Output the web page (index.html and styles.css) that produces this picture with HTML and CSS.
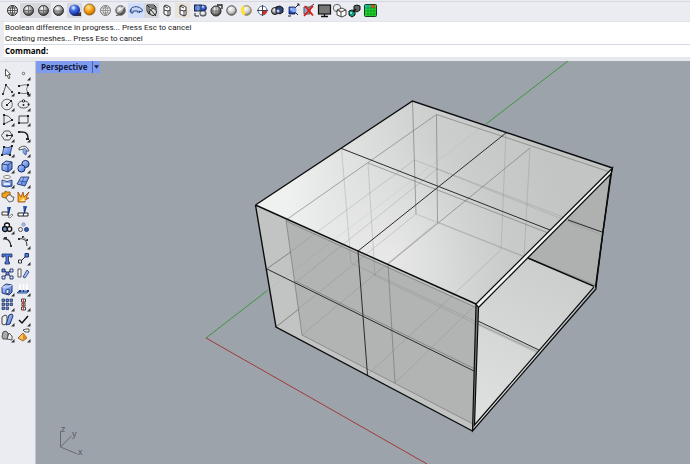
FILE: index.html
```html
<!DOCTYPE html>
<html lang="en">
<head>
<meta charset="utf-8">
<title>Perspective</title>
<link rel="stylesheet" href="styles.css">
</head>
<body>
<svg class="defs" aria-hidden="true">
  <defs>
    <radialGradient id="gray" cx=".4" cy=".3" r=".7"><stop offset="0" stop-color="#fff"/><stop offset=".5" stop-color="#aaa"/><stop offset="1" stop-color="#333"/></radialGradient>
    <radialGradient id="lite" cx=".4" cy=".3" r=".7"><stop offset="0" stop-color="#fff"/><stop offset=".6" stop-color="#ccc"/><stop offset="1" stop-color="#777"/></radialGradient>
    <radialGradient id="blue" cx=".4" cy=".3" r=".7"><stop offset="0" stop-color="#fff"/><stop offset=".35" stop-color="#4a78ee"/><stop offset="1" stop-color="#071c8c"/></radialGradient>
    <radialGradient id="orange" cx=".4" cy=".3" r=".7"><stop offset="0" stop-color="#ffe9a0"/><stop offset=".5" stop-color="#fba418"/><stop offset="1" stop-color="#c96a00"/></radialGradient>
    <linearGradient id="steel" x1="0" y1="0" x2="1" y2="1"><stop offset="0" stop-color="#c5d6fb"/><stop offset="1" stop-color="#3f70e0"/></linearGradient>
    <symbol id="grid" viewBox="0 0 15 15"><path d="M3 5h9M2.500 7.500h10M3 10h9M7.500 2.500v10M7.500 2.500c-3 3-3 7 0 10M7.500 2.500c3 3 3 7 0 10" fill="none" stroke="currentColor" stroke-width=".8"/></symbol>
    <symbol id="tick" viewBox="0 0 15 15"><path d="M14.500 11v3.500h-3.500z" fill="#333"/></symbol>
  </defs>
</svg>
<div class="app">
  <header class="toolbar">
    <div class="group">
      <button class="tool" aria-label="Wireframe"><svg viewBox="0 0 15 15"><circle cx="7.500" cy="7.500" r="5" fill="#fff" stroke="#222"/><use href="#grid"/></svg></button>
      <button class="tool pressed" aria-label="Shaded"><svg viewBox="0 0 15 15"><circle cx="7.500" cy="7.500" r="5" fill="url(#gray)" stroke="#333"/><path d="M3 7.500h9M7.500 3v9" stroke="#555" stroke-width=".7"/></svg></button>
      <button class="tool pressed" aria-label="Rendered"><svg viewBox="0 0 15 15"><circle cx="7.500" cy="7.500" r="5" fill="url(#gray)" stroke="#333"/><path d="M3 7.500h9M7.500 3v9" stroke="#555" stroke-width=".7"/></svg></button>
      <button class="tool" aria-label="Ghosted"><svg viewBox="0 0 15 15"><circle cx="7.500" cy="7.500" r="5" fill="url(#gray)" stroke="#333"/><path d="M3 8h9" stroke="#555" stroke-width=".7"/></svg></button>
      <button class="tool pressed" aria-label="Render"><svg viewBox="0 0 15 15"><path d="M5 13h9V9z" fill="#333"/><circle cx="7.500" cy="7" r="5.500" fill="url(#blue)"/></svg></button>
      <button class="tool" aria-label="Raytraced"><svg viewBox="0 0 15 15"><circle cx="7.500" cy="6.500" r="5.500" fill="url(#orange)" stroke="#79501d" stroke-width=".8"/></svg></button>
      <button class="tool" aria-label="X-ray"><svg class="soft" viewBox="0 0 15 15"><circle cx="7.500" cy="7.500" r="5" fill="#eee" stroke="#777"/><use href="#grid"/></svg></button>
      <button class="tool" aria-label="Technical"><svg viewBox="0 0 15 15"><circle cx="7.500" cy="7.500" r="4.700" fill="url(#gray)" stroke="#555"/><path d="M4 9l7-5" stroke="#fff" stroke-width=".8"/><path d="M3 12.500q6 0 9-8" fill="none" stroke="#555"/></svg></button>
      <button class="tool chosen" aria-label="Artistic"><svg viewBox="0 0 15 15"><path d="M1.500 7c1-4 7-4 10-2l2 2-1 2-2-1v2M2 6v4h2V8h5v2M1.500 7l-.5 2" fill="#c5d5f4" stroke="#2c4a86"/></svg></button>
      <button class="tool pressed" aria-label="Clipping"><svg viewBox="0 0 15 15"><path d="M3 2h7l2 2v3M3 2v6l2 3h2M3 2l2 2h7M5 4v7" fill="none" stroke="#222"/><circle cx="9" cy="9" r="3.500" fill="#ddd" stroke="#222"/><path d="M7 7l5 6" stroke="#222"/></svg></button>
      <button class="tool" aria-label="Cylinder"><svg viewBox="0 0 15 15"><path d="M5 3l2-1 4 2v8l-2 1-4-2zM5 7l4 1 2-1M9 8v5M5 3l4 2" fill="#fff" stroke="#222" stroke-width=".9"/></svg></button>
      <button class="tool dotted" aria-label="Edges"><svg viewBox="0 0 15 15"><path d="M5 3l2-1 4 2v8l-2 1-4-2zM5 7l4 1 2-1M9 8v5M5 3l4 2" fill="#fff" stroke="#222" stroke-width=".9"/></svg></button>
    </div>
    <div class="group">
      <button class="tool" aria-label="Shade selected"><svg viewBox="0 0 15 15"><rect x="1.500" y="2" width="7" height="6" fill="#345bb5" stroke="#17264e"/><path d="M2 4h6M2 6h6M5 2v6" stroke="#a9bde9" stroke-width=".7"/><circle cx="10.500" cy="5" r="3" fill="url(#blue)" stroke="#333" stroke-width=".7"/><rect x="7" y="8" width="6" height="5" rx="2" fill="url(#lite)" stroke="#234" stroke-width=".8"/><path d="M2 10v3h4" fill="none" stroke="#222"/></svg></button>
      <button class="tool" aria-label="Flat shade"><svg viewBox="0 0 15 15"><circle cx="7" cy="8" r="5" fill="url(#gray)" stroke="#222"/><path d="M2 8h10M7 3v10M4 4v8M10 4v8" stroke="#555" stroke-width=".6"/><path d="M8 2h5v4" fill="none" stroke="#222" stroke-width="1.300"/></svg></button>
      <button class="tool" aria-label="Material"><svg viewBox="0 0 15 15"><circle cx="7.500" cy="7.500" r="4.700" fill="url(#lite)" stroke="#444"/></svg></button>
      <button class="tool" aria-label="Light"><svg viewBox="0 0 15 15"><circle cx="7.500" cy="7.500" r="4.800" fill="url(#lite)" stroke="#9a8440"/><path d="M5 4a4 4 0 0 0 1 7" fill="none" stroke="#ffe337" stroke-width="3"/></svg></button>
      <button class="tool" aria-label="Curvature"><svg viewBox="0 0 15 15"><circle cx="7.500" cy="7.500" r="4.500" fill="#fff" stroke="#51679b"/><path d="M7.500 7.500H12a4.500 4.500 0 0 1-4.500 4.500z" fill="#e32a18"/><path d="M7.500 2v11M2 7.500h11" stroke="#445"/></svg></button>
      <button class="tool" aria-label="Join"><svg viewBox="0 0 15 15"><circle cx="5" cy="8" r="3.500" fill="url(#gray)" stroke="#222"/><path d="M6 4l4-1 3 2v4l-3 2-4-2z" fill="#304879" stroke="#111"/><circle cx="8" cy="8" r="1.500" fill="#bcd0ff"/></svg></button>
      <button class="tool" aria-label="Isolate"><svg viewBox="0 0 15 15"><path d="M3 4h6v7H3z" fill="url(#blue)" stroke="#15204c" stroke-width=".8"/><path d="M9 5l4-4M9 9l3 3" stroke="#222"/><path d="M11 1h2v2M2 13h3" stroke="#222" fill="none"/><circle cx="8" cy="7" r="2.500" fill="#83a6ee"/></svg></button>
      <button class="tool" aria-label="Remove"><svg viewBox="0 0 15 15"><path d="M3 4h6v7H3z" fill="#92a8cf" stroke="#555"/><path d="M9 4l4-3" stroke="#333"/><path d="M4 3l8 9.500M12 3l-9 10" stroke="#e3180d" stroke-width="1.800"/></svg></button>
      <button class="tool" aria-label="Display"><svg viewBox="0 0 15 15"><rect x="1.500" y="2" width="12" height="9" fill="#777" stroke="#111" stroke-width="1.200"/><path d="M7.500 11v2M4 13.500h7" stroke="#111" stroke-width="1.300"/></svg></button>
      <button class="tool" aria-label="Block"><svg viewBox="0 0 15 15"><circle cx="5" cy="5" r="3.700" fill="#eee" stroke="#666"/><path d="M5 7l5-2 4 2v5l-4 2-5-2zM5 7l4 2 5-2M9 9v5" fill="#fff" stroke="#333" stroke-width=".9"/></svg></button>
      <button class="tool" aria-label="Match"><svg viewBox="0 0 15 15"><path d="M7 3l3-1 3 1v4l-3 2-3-2z" fill="#666" stroke="#111"/><path d="M2 8l3-1 3 1v4l-3 2-3-2z" fill="#159b7c" stroke="#111"/><path d="M3 9h2v2H3z" fill="#63e7dd"/><path d="M6 9l3-3" stroke="#111" stroke-width="1.500"/></svg></button>
      <button class="tool" aria-label="Analysis"><svg viewBox="0 0 15 15"><rect x="1.500" y="1.500" width="12" height="12" rx="1" fill="#21d82c" stroke="#183f20"/><path d="M2 2h5v4H2z" fill="#15c8a0"/><path d="M8 2h4v3H8z" fill="#f04b22"/><path d="M2 5h11M2 8h11M2 11h11M5 2v11M8 2v11M11 2v11" stroke="#157527" stroke-width=".5"/></svg></button>
    </div>
  </header>

  <section class="console">
    <div class="log">
      <p>Boolean difference in progress... Press Esc to cancel</p>
      <p>Creating meshes... Press Esc to cancel</p>
    </div>
    <div class="prompt">
      <label for="command">Command:</label>
      <input id="command" type="text" autocomplete="off">
    </div>
  </section>

  <div class="work">
    <nav class="palette" aria-label="Tools">
      <button class="tool" aria-label="Select"><svg viewBox="0 0 15 15"><path d="M5.500 3v7l1.500-1 1.500 3.500 1.500-.5-1.500-3.500h2z" fill="#fff" stroke="#444" stroke-width=".9"/></svg></button>
      <button class="tool" aria-label="Point"><svg viewBox="0 0 15 15"><circle cx="7.500" cy="7.500" r="1.200" fill="#fff" stroke="#444" stroke-width=".8"/><use href="#tick"/></svg></button>
      <button class="tool" aria-label="Polyline"><svg viewBox="0 0 15 15"><path d="M3 12L6 3l6 7" fill="none" stroke="#444" stroke-width=".9"/><path d="M2 11h2v2H2zM5 2h2v2H5zM11 9h2v2h-2z" fill="#333"/><use href="#tick"/></svg></button>
      <button class="tool" aria-label="Curve"><svg viewBox="0 0 15 15"><path d="M4 4q4-2 8-1-3 5 0 8-4 1-9 0" fill="none" stroke="#555" stroke-width=".8"/><path d="M2 3h2v2H2zM11 2h2v2h-2zM2 10h2v2H2zM11 10h2v3h-2z" fill="#222"/><use href="#tick"/></svg></button>
      <button class="tool" aria-label="Circle"><svg viewBox="0 0 15 15"><circle cx="7" cy="7.500" r="5.300" fill="none" stroke="#555" stroke-width=".9"/><path d="M7 8l4-4" stroke="#333"/><path d="M6 7h2v2H6zM10 3h2v2h-2z" fill="#222"/><use href="#tick"/></svg></button>
      <button class="tool" aria-label="Ellipse"><svg viewBox="0 0 15 15"><ellipse cx="7.500" cy="7.500" rx="5.500" ry="3.500" fill="none" stroke="#444" stroke-width=".9"/><circle cx="7.500" cy="4" r="1.200" fill="#fff" stroke="#222"/><circle cx="7.500" cy="8" r="1" fill="#222"/><circle cx="12.500" cy="7.500" r="1" fill="#222"/><use href="#tick"/></svg></button>
      <button class="tool" aria-label="Arc"><svg viewBox="0 0 15 15"><path d="M4 3v9l8-4Q9 3 4 3" fill="none" stroke="#444" stroke-width=".9"/><path d="M3 2h2v2H3zM3 11h2v2H3zM11 7h2v2h-2z" fill="#222"/><use href="#tick"/></svg></button>
      <button class="tool" aria-label="Rectangle"><svg viewBox="0 0 15 15"><path d="M3 4h9v7H3z" fill="none" stroke="#333" stroke-width=".9"/><path d="M2 10h2v2H2zM11 3h2v2h-2z" fill="#222"/><use href="#tick"/></svg></button>
      <button class="tool" aria-label="Polygon"><svg viewBox="0 0 15 15"><path d="M4.500 3h5l3 4.500-3 4.500h-5l-3-4.500z" fill="none" stroke="#444" stroke-width=".9"/><path d="M7 7.500h5" stroke="#333"/><path d="M6 6.500h2v2H6zM11 6.500h2v2h-2z" fill="#222"/><use href="#tick"/></svg></button>
      <button class="tool" aria-label="Fillet"><svg viewBox="0 0 15 15"><path d="M3 4h3q6 0 6 6v2" fill="none" stroke="#222" stroke-width="1.500"/><path d="M2 3h2v2H2zM10 10h3v2h-3z" fill="#222"/><use href="#tick"/></svg></button>
      <button class="tool" aria-label="Surface"><svg viewBox="0 0 15 15"><path d="M4 4q4 2 8-1l-2 9q-3-2-8 0z" fill="url(#steel)" stroke="#23386f" stroke-width=".8"/><path d="M3 3h2v2H3zM11 2h2v2h-2zM1 11h2v2H1zM9 11h2v2H9z" fill="#222"/><use href="#tick"/></svg></button>
      <button class="tool" aria-label="Sweep"><svg viewBox="0 0 15 15"><path d="M3 5q7-5 10 3H9Q7 5 3 7z" fill="#eee" stroke="#333" stroke-width=".8"/><path d="M8 5q4 1 2 7-5-2-2-7z" fill="url(#steel)" stroke="#29488e" stroke-width=".6"/><use href="#tick"/></svg></button>
      <button class="tool" aria-label="Box"><svg viewBox="0 0 15 15"><path d="M2 5l4-3 6 1v7l-4 3-6-2z" fill="url(#steel)" stroke="#172b63" stroke-width=".9"/><path d="M2 5l6 1 4-3M8 6v7" fill="none" stroke="#172b63" stroke-width=".8"/><use href="#tick"/></svg></button>
      <button class="tool" aria-label="Union"><svg viewBox="0 0 15 15"><circle cx="9.500" cy="5" r="3.600" fill="url(#steel)" stroke="#172b63"/><circle cx="5.500" cy="9.500" r="3.600" fill="url(#steel)" stroke="#172b63"/><use href="#tick"/></svg></button>
      <button class="tool" aria-label="Revolve"><svg viewBox="0 0 15 15"><ellipse cx="7" cy="3" rx="3.500" ry="1.500" fill="#fff" stroke="#666" stroke-width=".8"/><path d="M2 6q5 3 10 0v6q-5 2-10 0z" fill="url(#steel)" stroke="#172b63" stroke-width=".8"/><path d="M4 9h6v2H4z" fill="#e5eeff"/><use href="#tick"/></svg></button>
      <button class="tool" aria-label="Mesh"><svg viewBox="0 0 15 15"><path d="M5 3l8 0-4 9-8-2z" fill="url(#steel)" stroke="#172b63" stroke-width=".8"/><path d="M3 7l8 1M8 3l-3 8" stroke="#29458e" stroke-width=".7"/><use href="#tick"/></svg></button>
      <button class="tool" aria-label="Group"><svg viewBox="0 0 15 15"><path d="M2 4h3V2l2 1h3v3l-2 3H5L2 8z" fill="#f6a21a" stroke="#835009" stroke-width=".8"/><path d="M8 6h3l1 2h2l-1 4-4 1-3-4z" fill="#eee" stroke="#444" stroke-width=".8"/></svg></button>
      <button class="tool" aria-label="Explode"><svg viewBox="0 0 15 15"><path d="M2 13V3l3 5 2-5 1 5 5-5-3 6h3l-4 2v2z" fill="#f8ae21" stroke="#99450b" stroke-width=".8"/><path d="M4 12l4-3 1 3z" fill="#fff0a6"/></svg></button>
      <button class="tool" aria-label="Trim"><svg viewBox="0 0 15 15"><path d="M7 2h4l-2 7H8z" fill="#2e60bd"/><path d="M2 7h6v3H2z" fill="#fff" stroke="#222" stroke-width=".9"/><path d="M8 12l4-3 1 1-3 3z" fill="#fff" stroke="#555" stroke-width=".7"/><path d="M10 2L8 11" stroke="#152c63"/></svg></button>
      <button class="tool" aria-label="Split"><svg viewBox="0 0 15 15"><path d="M7 1h4l-2 7H8z" fill="#2e60bd"/><path d="M2 8h10v3H2z" fill="#fff" stroke="#222"/><path d="M10 2L7 11" stroke="#172b63"/></svg></button>
      <button class="tool" aria-label="Color"><svg viewBox="0 0 15 15"><circle cx="7" cy="5.500" r="2.500" fill="#fff" stroke="#111" stroke-width="1.300"/><circle cx="5" cy="9" r="2.500" fill="#7192dc" stroke="#111" stroke-width="1.300"/><circle cx="9.500" cy="9" r="2.300" fill="#ddd" stroke="#111" stroke-width="1.300"/><use href="#tick"/></svg></button>
      <button class="tool" aria-label="Ungroup"><svg viewBox="0 0 15 15"><circle cx="7.500" cy="4.500" r="1.700" fill="#a9bdf0" stroke="#788ab8" stroke-width=".8"/><circle cx="4.500" cy="9.500" r="2" fill="#eee" stroke="#555"/><circle cx="10.500" cy="9.500" r="2" fill="#2e56c1" stroke="#213976"/></svg></button>
      <button class="tool" aria-label="Edit points"><svg viewBox="0 0 15 15"><path d="M3 4q7-1 8 7" fill="none" stroke="#222" stroke-width="1.200"/><path d="M4 2h3v2H4zM10 10h2v2h-2z" fill="#333"/></svg></button>
      <button class="tool" aria-label="Control points"><svg viewBox="0 0 15 15"><path d="M2 4q9-2 9 7" fill="none" stroke="#222" stroke-width=".9"/><path d="M6 1h2v2H6zM10 4h2v2h-2zM2 3h2v2H2z" fill="#333"/><path d="M7 2l4 3" stroke="#777"/><use href="#tick"/></svg></button>
      <button class="tool" aria-label="Text"><svg viewBox="0 0 15 15"><path d="M2 3h10v3h-2V5H8.500v6h1v2H5v-2h1V5H4v1H2z" fill="#527fdd" stroke="#172b63" stroke-width=".8"/></svg></button>
      <button class="tool" aria-label="Move"><svg viewBox="0 0 15 15"><path d="M5 10l6-6" stroke="#222"/><path d="M9 2.500h3.500v3.500H9z" fill="#517bdc" stroke="#18316f"/><path d="M2.500 9h3v3h-3z" fill="#fff" stroke="#333"/><use href="#tick"/></svg></button>
      <button class="tool" aria-label="Rotate"><svg viewBox="0 0 15 15"><path d="M4 4l7 7M11 4l-7 7" stroke="#333"/><path d="M2 3h3v3H2zM6 6h3v3H6z" fill="#6b8ee2" stroke="#172b63" stroke-width=".9"/><path d="M10 3h3v3h-3zM10 10h3v3h-3zM2 10h3v3H2z" fill="#dde5f8" stroke="#172b63" stroke-width=".9"/></svg></button>
      <button class="tool" aria-label="Mirror"><svg viewBox="0 0 15 15"><path d="M2 3h3v8H2z" fill="#fff" stroke="#444" stroke-width=".9"/><path d="M7 11l4-7 2 2-4 6z" fill="#a9c1f6" stroke="#294581" stroke-width=".9"/></svg></button>
      <button class="tool" aria-label="Solid edit"><svg viewBox="0 0 15 15"><path d="M2 5l4-3 6 1v7l-3 3-7-2z" fill="url(#steel)" stroke="#172b63" stroke-width=".9"/><path d="M2 5h6l4-2" fill="none" stroke="#dbe6ff"/><path d="M6 8l3-1v4l-3 1z" fill="#e8eeff" stroke="#172b63" stroke-width=".8"/><use href="#tick"/></svg></button>
      <button class="tool" aria-label="Extrude"><svg viewBox="0 0 15 15"><path d="M4 8V2M7.500 8V2M11 8V2" stroke="#fff" stroke-width="1.500"/><path d="M3 9h10l-2 2H1z" fill="#8eabef" stroke="#24488f" stroke-width=".9"/><path d="M3 8h2v2H3zM7 8h1v2H7zM11 8h2v2h-2z" fill="#173b8b"/><use href="#tick"/></svg></button>
      <button class="tool" aria-label="Array"><svg viewBox="0 0 15 15"><path d="M2 2h2.500v2.500H2zM6 2h2.500v2.500H6zM10 2h2.500v2.500H10zM2 6h2.500v2.500H2zM6 6h2.500v2.500H6zM10 6h2.500v2.500H10zM2 10h2.500v2.500H2zM6 10h2.500v2.500H6z" fill="#6387d8" stroke="#233965" stroke-width=".8"/><use href="#tick"/></svg></button>
      <button class="tool" aria-label="Align"><svg viewBox="0 0 15 15"><path d="M5.500 2h4v3h-4zM6 6h3v3H6zM5.500 10h4v3h-4z" fill="#eee" stroke="#333" stroke-width=".9"/><path d="M7.500 2v11" stroke="#d93d25"/><use href="#tick"/></svg></button>
      <button class="tool" aria-label="Blocks"><svg viewBox="0 0 15 15"><path d="M2 5l3-2 2 1v7l-3 2-2-1z" fill="#eee" stroke="#333" stroke-width=".9"/><path d="M9 3l3-1 1 2-3 8-4 1z" fill="url(#steel)" stroke="#172b63" stroke-width=".9"/><use href="#tick"/></svg></button>
      <button class="tool" aria-label="Check"><svg viewBox="0 0 15 15"><path d="M3 8l3 3 6-7" fill="none" stroke="#111" stroke-width="1.500"/><use href="#tick"/></svg></button>
      <button class="tool" aria-label="Dimension"><svg viewBox="0 0 15 15"><path d="M2 9l1-5 3-1 2 2v6H3z" fill="#aaa" stroke="#444" stroke-width=".9"/><path d="M7 11l2-6 3 3v4z" fill="#eee" stroke="#444" stroke-width=".9"/><use href="#tick"/></svg></button>
      <button class="tool" aria-label="Render tools"><svg viewBox="0 0 15 15"><path d="M2 10l5-5 4 5-4 3z" fill="#f9c258" stroke="#7f4c13" stroke-width=".8"/><path d="M7 5v8l4-3z" fill="#dd8a1f"/><path d="M7 2l3-1h3v3H9z" fill="#eee" stroke="#333" stroke-width=".8"/><use href="#tick"/></svg></button>
    </nav>

    <main class="viewport">
      <svg class="scene" viewBox="36 61 654 403" preserveAspectRatio="xMinYMin slice" role="img" aria-label="Ghosted open box">
        <defs>
          <linearGradient id="lid" gradientUnits="userSpaceOnUse" x1="290" y1="190" x2="540" y2="120"><stop offset="0" stop-color="#eff0f0"/><stop offset=".3" stop-color="#dedfdf"/><stop offset=".6" stop-color="#cdcfcf"/><stop offset="1" stop-color="#c3c5c5"/></linearGradient>
          <radialGradient id="glow" gradientUnits="userSpaceOnUse" cx="390" cy="255" r="120"><stop offset="0" stop-color="#ececec" stop-opacity=".7"/><stop offset="1" stop-color="#ddd" stop-opacity="0"/></radialGradient>
          <linearGradient id="floor" gradientUnits="userSpaceOnUse" x1="560" y1="260" x2="480" y2="410"><stop offset="0" stop-color="#cbcdcd"/><stop offset="1" stop-color="#dedfdf"/></linearGradient>
        </defs>
        <path class="axis-y" d="M568 61L486 124M268 290L206 338"/>
        <path class="axis-x" d="M206 338L427 464"/>
        <path fill="url(#lid)" d="M255.500 205L412.500 101 612.500 168 476 304z"/>
        <path fill="url(#glow)" d="M255.500 205L412.500 101 612.500 168 476 304z"/>
        <path fill="#c1c4c3" d="M255.500 205L476 304 472.500 431 276 327z"/>
        <path fill="#b2b4b3" d="M286 220L476 307 473 424 302 335z"/>
        <path fill="#afb0b0" d="M611 173L595.500 287 526 258z"/>
        <path fill="url(#floor)" d="M526 258L595.500 287 474 426 478 307z"/>
        <g class="hidden">
          <path d="M416 214L276 327M416 214L595 285M437.500 222L302 335M437.500 222L594 284"/>
          <path d="M341.500 148.500L351 263 539 351M368 163L375 276 539 354"/>
          <path d="M267 269L414.500 160 602 232M295 283L437 169 602 235"/>
          <path d="M506 133L501 250 367.500 375M530 148L524 258 395 383"/>
          <path d="M486 124L268 290" opacity=".4"/>
        </g>
        <g class="inner">
          <path d="M286 220L436.500 114.500 610 172M436.500 114.500L437.500 222M412.500 101L416 214"/>
          <path d="M286 220L302 335 473 424M286 221L476 307.500M368 163L548 233M530 148L388 264 395 383"/>
          <path d="M276 327L299 309M267 268.500L291 252"/>
          <path d="M295 281L475 369M478 324L538 352"/>
        </g>
        <path class="iso" d="M341.500 148.500L550 230M506.500 132.500L358 251 367.500 375M267 269L475 371.500M568 220L602 232M478 321L539 350"/>
        <path class="edge" d="M255.500 205L412.500 101 612.500 168M255.500 205L276 327 472.500 431M255.500 205L476 304M611 172L595.500 287 528 258"/>
        <path fill="#f3f4f4" d="M476 304L612.500 168 611 173 478 307z"/>
        <path fill="#d8dada" d="M472.500 431L595.500 287 594 286 474 425z"/>
        <path fill="#777" d="M476 304L478.500 307 474.500 426 472.500 431z"/>
        <path class="lip" d="M476 304L612.500 168 611 174 478.500 307.500zM478.500 307.500L474.500 425 594 287M476 304L472.500 431 596 289V286"/>
        <path class="edge" d="M612 169L611 176 603 232 596 287"/>
        <g class="gnomon">
          <path d="M60.500 431v16l17 7M60.500 447l11-11"/>
          <text x="61" y="432">z</text>
          <text x="72" y="437">y</text>
          <text x="78" y="455">x</text>
        </g>
      </svg>
      <div class="caption">
        <span class="name">Perspective</span>
        <button class="drop" aria-label="Viewport menu"><svg viewBox="0 0 6 4"><path d="M0 0h6L3 4z" fill="#1c2340"/></svg></button>
      </div>
    </main>
  </div>
</div>
</body>
</html>
```
FILE: styles.css
```css
* {
  box-sizing: border-box;
}

body {
  margin: 0;
  font-family: "Open Sans", "Noto Sans", sans-serif;
  font-size: 8px;
  line-height: 11px;
  color: #1a1a1a;
  background: #ebecf1;
}

button,
input {
  margin: 0;
  padding: 0;
  border: 0;
  font: inherit;
  background: none;
}

.defs {
  position: absolute;
  width: 0;
  height: 0;
}

.app {
  display: flex;
  flex-direction: column;
  height: 100vh;
}

.toolbar {
  display: flex;
  gap: 3px;
  padding: 3px 5px;
  border-bottom: 1px solid #e2e4ea;
  background: linear-gradient(#ebecf1 1px, #d5d8e0 1px, #d5d8e0 2px, #ebecf1 2px);
}

.group {
  display: grid;
  grid-template-columns: repeat(12, 1fr);
  width: 185px;
}

.tool {
  display: flex;
  align-items: center;
  justify-content: center;
  min-width: 0;
  color: #333;
}

.tool svg {
  display: block;
  width: 15px;
  height: 15px;
}

.tool .soft {
  color: #888;
}

.pressed {
  background: #d6d8dd;
}

.chosen {
  background: #d3dffa;
}

.dotted {
  background: #e9e2d8;
}

.console {
  margin-left: 4px;
  border-bottom: 4px solid #e6e8ee;
  background: #fff;
}

.log {
  padding: 0 1px;
  border-bottom: 1px solid #d3dae2;
  font-family: Roboto, "Open Sans", sans-serif;
}

.log p {
  margin: 0;
}

.prompt {
  display: flex;
  padding: 0 1px 1px;
}

.prompt label {
  font-weight: 700;
  color: #000;
}

.prompt input {
  flex: 1;
  min-width: 0;
  height: 11px;
  outline: 0;
}

.work {
  display: flex;
  flex: 1;
  min-height: 0;
}

.palette {
  display: grid;
  grid-template-columns: 1fr 1fr;
  grid-template-rows: repeat(18, 1fr);
  align-self: flex-start;
  width: 35px;
  height: 282px;
  padding: 4px 4px 0 0;
  border-top: 1px solid #dadde4;
}

.viewport {
  display: grid;
  flex: 1;
  min-width: 0;
  overflow: hidden;
  border-left: 1px solid #c3c8cf;
  background: #9ca3ab;
}

.scene,
.caption {
  grid-area: 1 / 1;
}

.scene {
  display: block;
  width: 100%;
  height: 100%;
  min-height: 0;
  fill: none;
}

.caption {
  display: flex;
  align-self: start;
  justify-self: start;
  background: #7f9bf0;
}

.name {
  padding: 0 5px 1px;
  font-weight: 700;
  color: #10183a;
}

.drop {
  display: flex;
  align-items: center;
  justify-content: center;
  width: 8px;
  border-left: 1px solid #4c62a8;
}

.drop svg {
  width: 5px;
  height: 4px;
}

.axis-y {
  stroke: #3c963c;
}

.axis-x {
  stroke: #a03a3a;
}

.hidden {
  stroke: #777;
  stroke-opacity: .32;
  stroke-width: .8;
}

.inner {
  stroke: #666;
  stroke-opacity: .6;
  stroke-width: .9;
}

.iso {
  stroke: #2b2b2b;
}

.edge {
  stroke: #0c0c0c;
  stroke-width: 1.4;
}

.lip {
  stroke: #0c0c0c;
  stroke-width: 1.2;
}

.gnomon {
  stroke: #666b70;
}

.gnomon text {
  stroke: none;
  fill: #565b60;
  font-family: "Liberation Sans", sans-serif;
  font-size: 9px;
}
```
